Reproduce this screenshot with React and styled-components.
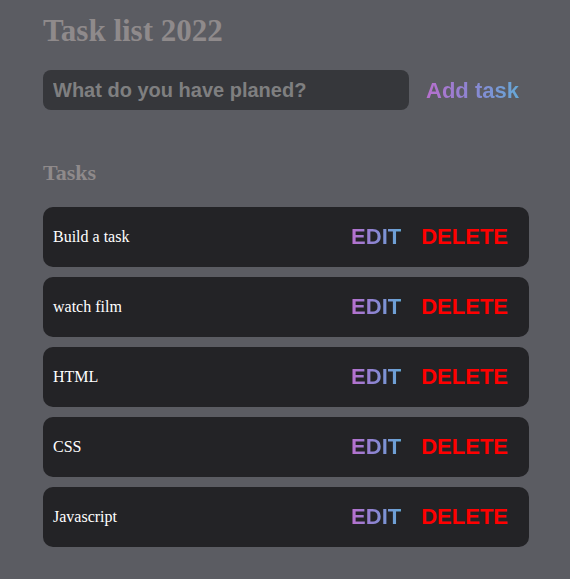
import { createGlobalStyle } from 'styled-components';
import styled from 'styled-components';

const gradient = 'linear-gradient(90deg, #b86fce, #8a86d2 50%, #66a8d6)';

const GlobalStyle = createGlobalStyle`
  html, body {
    margin: 0;
    background: #5b5c62;
  }
`;

function App() {
  const tasks = ['Build a task', 'watch film', 'HTML', 'CSS', 'Javascript'];

  return (
    <>
      <GlobalStyle />
      <Page>
        <Title>Task list 2022</Title>
        <Form onSubmit={e => e.preventDefault()}>
          <Input placeholder="What do you have planed?" />
          <AddButton type="submit">Add task</AddButton>
        </Form>
        <SubTitle>Tasks</SubTitle>
        <List>
          {tasks.map(task => (
            <Task key={task}>
              <TaskText>{task}</TaskText>
              <Actions>
                <EditButton>EDIT</EditButton>
                <DeleteButton>DELETE</DeleteButton>
              </Actions>
            </Task>
          ))}
        </List>
      </Page>
    </>
  );
}

export default App;

const Page = styled.div`
  width: 486px;
  padding: 13px 0 0 43px;
`;

const Title = styled.h1`
  margin: 0;
  font-family: 'Liberation Serif', serif;
  font-size: 31px;
  font-weight: bold;
  line-height: 36px;
  color: #8f8a8b;
`;

const Form = styled.form`
  display: flex;
  align-items: center;
  gap: 17px;
  margin-top: 21px;
`;

const Input = styled.input`
  width: 366px;
  height: 40px;
  box-sizing: border-box;
  padding: 0 10px;
  border: none;
  outline: none;
  border-radius: 8px;
  background: #36373b;
  font-family: 'Liberation Sans', Arial, sans-serif;
  font-size: 20px;
  font-weight: bold;
  color: #ddd;
  &::placeholder {
    color: #7f7f80;
  }
`;

const GradientText = styled.button`
  border: none;
  background: ${gradient};
  -webkit-background-clip: text;
  background-clip: text;
  color: transparent;
  font-family: 'Liberation Sans', Arial, sans-serif;
  font-size: 22px;
  font-weight: bold;
  cursor: pointer;
`;

const AddButton = styled(GradientText)`
  padding: 0;
  margin-top: 1px;
`;

const SubTitle = styled.h2`
  margin: 50px 0 0;
  font-family: 'Liberation Serif', serif;
  font-size: 22px;
  font-weight: bold;
  line-height: 26px;
  color: #8f8a8b;
`;

const List = styled.ul`
  list-style: none;
  margin: 21px 0 0;
  padding: 0;
  display: flex;
  flex-direction: column;
  gap: 10px;
`;

const Task = styled.li`
  height: 60px;
  display: flex;
  align-items: center;
  justify-content: space-between;
  padding: 0 10px;
  border-radius: 10px;
  background: #232326;
`;

const TaskText = styled.span`
  font-family: 'Liberation Serif', serif;
  font-size: 16px;
  color: #fff;
`;

const Actions = styled.div`
  display: flex;
  align-items: center;
`;

const EditButton = styled(GradientText)`
  padding: 0 10px;
  background-origin: content-box;
  background-clip: text;
`;

const DeleteButton = styled.button`
  border: none;
  background: none;
  padding: 0 11px 0 10px;
  color: #ff0000;
  font-family: 'Liberation Sans', Arial, sans-serif;
  font-size: 22px;
  font-weight: bold;
  cursor: pointer;
`;
